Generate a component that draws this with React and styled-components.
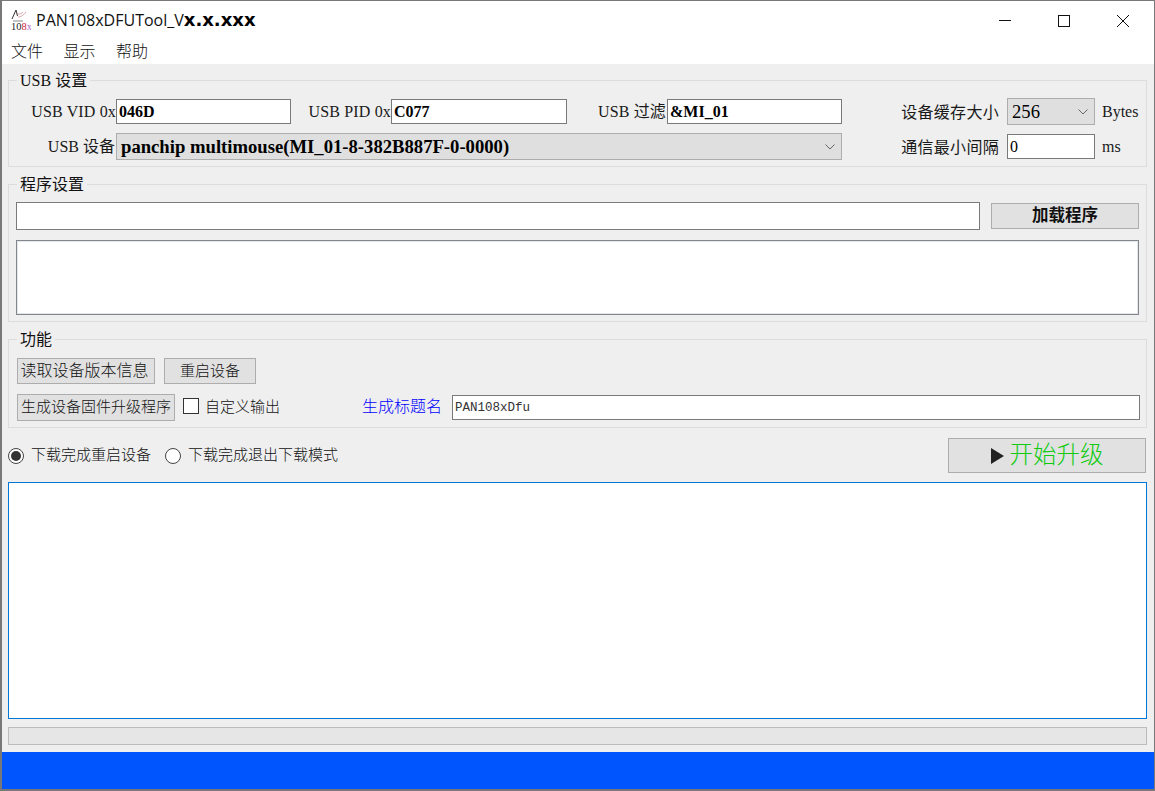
import React from "react";
import styled, { createGlobalStyle } from "styled-components";

const Global = createGlobalStyle`
  html, body { margin: 0; padding: 0; background: #fff; }
  * { box-sizing: border-box; }
`;
const SERIF = `"Liberation Serif", "Noto Sans CJK SC", serif`;
const CJK = `"Noto Sans CJK SC", "Liberation Serif", sans-serif`;

const Window = styled.div`
  width: 1155px; height: 791px; display: flex; flex-direction: column; overflow: hidden;
  border-style: solid; border-color: #787878; border-width: 1px 1px 2px 2px;
  background: #fff; font-family: ${SERIF}; font-size: 16px; color: #111;
`;
const TitleBar = styled.div`
  height: 38px; flex: none; display: flex; align-items: center; padding-left: 8px;
`;
const TitleText = styled.div`
  margin-left: 5px; font: 16px "Open Sans", sans-serif; color: #111; white-space: nowrap;
`;
const TitleVersion = styled.b`
  font: bold 18px "DejaVu Sans", sans-serif; color: #000;
`;
const WinButtons = styled.div`
  margin-left: auto; display: flex; height: 100%; padding-right: 2px;
`;
const WinButton = styled.div`
  width: 59px; display: flex; align-items: center; justify-content: center; padding-top: 2px;
`;
const Menu = styled.div`
  height: 25px; flex: none; display: flex; gap: 20.5px; padding: 0 0 4px 9px; align-items: center;
  font: 300 16px ${CJK}; color: #111;
`;
const Content = styled.div`
  flex: 1; background: #efefef; padding: 5px 7px 0 6px; display: flex; flex-direction: column; min-height: 0;
`;
const Group = styled.fieldset`
  margin: 0 0 ${p => p.$mb ?? 6}px; min-width: 0; border: 1px solid #dcdcdc; padding: ${p => p.$pad};
`;
const Legend = styled.legend`
  margin-left: ${p => p.$ml}px; padding: 0 3px; height: 22px; line-height: 24px; font-size: 16px; color: #111;
`;
const UsbGrid = styled.div`
  display: grid; grid-template-columns: 107px 175px 100px 176px 100px 175px 165px 88px 1fr;
  grid-auto-rows: 27px; row-gap: 8px; align-items: center; margin-top: 7px;
`;
const Label = styled.span`
  justify-self: ${p => p.$left ? "start" : "end"}; white-space: nowrap; color: #1a1a1a;
  padding: 0 ${p => p.$pr || 0}px ${p => p.$pb || 0}px ${p => p.$pl || 0}px;
  letter-spacing: ${p => p.$ls ?? 0.15}px; font-size: 16px;
`;
const Field = styled.input`
  height: 25px; width: 100%; border: 1px solid #7a7a7a; background: #fff; outline: none; padding: 0 2px;
  font: ${p => (p.$bold ? "bold" : "normal")} 16px ${SERIF}; color: #000; border-radius: 0;
`;
const SelectBox = styled.div`
  height: 27px; display: flex; align-items: center; justify-content: space-between;
  background: #dfdfdf; border: 1px solid #adadad; padding: 1px 6px 0 4px; color: #000;
  font-size: 18.67px; font-weight: ${p => p.$bold ? 700 : 400};
  grid-column: ${p => p.$span || "auto"}; white-space: nowrap;
`;
const Chevron = () => (
  <svg width="10" height="6" viewBox="0 0 10 6" fill="none"><path d="M.5.5 5 5 9.5.5" stroke="#666" strokeWidth="1" /></svg>
);
const PathRow = styled.div`
  display: grid; grid-template-columns: 1fr 148px; column-gap: 11px; align-items: center; height: 28px;
`;
const PathInput = styled(Field)`height: 28px;`;
const Button = styled.button`
  height: ${p => p.$h || 26}px; width: ${p => p.$w ? p.$w + "px" : "auto"}; flex: none;
  padding: 0 ${p => p.$pr || 0}px 4px 0;
  background: #e1e1e1; border: 1px solid #adadad; border-radius: 0; color: #111;
  font: ${p => p.$bold ? 700 : 300} ${p => p.$size || 15}px ${CJK};
  display: flex; align-items: center; justify-content: center; white-space: nowrap;
`;
const InfoBox = styled.div`
  height: 75px; margin-top: 10px; background: #fff; border: 1px solid #82868f;
  box-shadow: inset 1px 1px 0 #e6e6e6, inset -1px -1px 0 #e6e6e6;
`;
const FuncRow = styled.div`
  display: flex; align-items: center; gap: 9px; height: ${p => p.$h}px; margin-top: ${p => p.$mt || 0}px;
`;
const Check = styled.span`
  width: 16px; height: 16px; flex: none; background: #fff; border: 1px solid #333; margin: 0 -3px 3px -1px;
`;
const CjkText = styled.span`
  font: ${p => p.$weight || 300} ${p => p.$size || 15}px ${CJK}; color: ${p => p.$color || "#111"}; white-space: nowrap;
  margin: 0 ${p => p.$mr || 0}px 0 ${p => p.$ml || 0}px; padding-bottom: 5px;
`;
const TitleInput = styled.input`
  flex: 1; min-width: 0; height: 25px; border: 1px solid #7a7a7a; background: #fff; outline: none; padding: 0 2px;
  font: 12.5px "Liberation Mono", monospace; color: #333; border-radius: 0;
`;
const ActionRow = styled.div`
  height: 35px; margin-top: 10px; flex: none; display: flex; align-items: center;
`;
const Radio = styled.span`
  width: 16px; height: 16px; flex: none; border-radius: 50%; background: #fff; border: 1px solid #444;
  margin-left: ${p => p.$ml || 0}px; margin-right: 7px; display: flex; align-items: center; justify-content: center;
  &::after { content: ""; width: 10px; height: 10px; border-radius: 50%; background: ${p => p.$on ? "#333" : "transparent"}; }
`;
const StartButton = styled.button`
  margin: 0 1px 0 auto; width: 198px; height: 35px; padding: 0; background: #e1e1e1; border: 1px solid #adadad; border-radius: 0;
  display: flex; align-items: center; justify-content: center; gap: 6px;
`;
const StartLabel = styled.span`
  font: 300 23.5px ${CJK}; color: #0ecb0e; line-height: 1; padding-bottom: 4px;
`;
const LogBox = styled.div`
  height: 237px; margin-top: 9px; flex: none; background: #fff; border: 1px solid #0078d7;
`;
const Progress = styled.div`
  height: 18px; margin-top: 8px; flex: none; background: #e6e6e6; border: 1px solid #bcbcbc;
`;
const StatusBar = styled.div`
  height: 37px; flex: none; margin: 7px -7px 0 -6px; background: #0055ff;
`;

const Logo = () => (
  <svg width="21" height="24" viewBox="0 0 21 24">
    <path d="M2 11 6 2l1.5 6" fill="none" stroke="#333" strokeWidth="1" />
    <path d="M7 5c2 2 4 1 6-1m-5 5c2 0 5-1 8-5" fill="none" stroke="#c98a92" strokeWidth=".8" />
    <rect x="3" y="12.5" width="10" height="1" fill="#888" />
    <text x="1" y="22" fontFamily="Liberation Serif" fontSize="10.5" fill="#222">10<tspan fill="#c23">8</tspan><tspan fill="#a6c">x</tspan></text>
  </svg>
);

export default function App() {
  return (
    <Window>
      <Global />
      <TitleBar>
        <Logo />
        <TitleText>PAN108xDFUTool_V<TitleVersion>x.x.xxx</TitleVersion></TitleText>
        <WinButtons>
          <WinButton><svg width="12" height="12" viewBox="0 0 12 12"><path d="M0 5.5h12" stroke="#111" /></svg></WinButton>
          <WinButton><svg width="12" height="12" viewBox="0 0 12 12"><rect x=".5" y=".5" width="11" height="11" fill="none" stroke="#111" /></svg></WinButton>
          <WinButton><svg width="12" height="12" viewBox="0 0 12 12"><path d="M0 0l12 12M12 0 0 12" stroke="#111" /></svg></WinButton>
        </WinButtons>
      </TitleBar>
      <Menu><span>文件</span><span>显示</span><span>帮助</span></Menu>
      <Content>
        <Group $pad="0 0 6px 0">
          <Legend $ml={8}>USB 设置</Legend>
          <UsbGrid>
            <Label>USB VID 0x</Label>
            <Field $bold readOnly value="046D" />
            <Label>USB PID 0x</Label>
            <Field $bold readOnly value="C077" />
            <Label $pb={4} $pr={1}>USB 过滤</Label>
            <Field $bold readOnly value="&MI_01" />
            <Label $pb={2} $pr={8} $ls={0.3}>设备缓存大小</Label>
            <SelectBox>256<Chevron /></SelectBox>
            <Label $left $pl={7} $ls={0}>Bytes</Label>
            <Label $pb={4} $pr={1} $ls={0}>USB 设备</Label>
            <SelectBox $bold $span="2 / span 5">panchip multimouse(MI_01-8-382B887F-0-0000)<Chevron /></SelectBox>
            <Label $pb={2} $pr={8} $ls={0.3}>通信最小间隔</Label>
            <Field readOnly value="0" />
            <Label $left $pl={7} $ls={0}>ms</Label>
          </UsbGrid>
        </Group>
        <Group $pad="7px 7px 6px">
          <Legend $ml={1}>程序设置</Legend>
          <PathRow>
            <PathInput readOnly value="" />
            <Button $bold $size={16.5}>加载程序</Button>
          </PathRow>
          <InfoBox />
        </Group>
        <Group $pad="8px 6px 6px 8px" $mb={0}>
          <Legend $ml={0}>功能</Legend>
          <FuncRow $h={26}>
            <Button $w={138} $size={16} $pr={3}>读取设备版本信息</Button>
            <Button $w={92}>重启设备</Button>
          </FuncRow>
          <FuncRow $h={27} $mt={10}>
            <Button $w={158} $h={27}>生成设备固件升级程序</Button>
            <Check />
            <CjkText>自定义输出</CjkText>
            <CjkText $color="#0000ff" $ml={73} $mr={1} $size={16} $weight={300}>生成标题名</CjkText>
            <TitleInput readOnly value="PAN108xDfu" />
          </FuncRow>
        </Group>
        <ActionRow>
          <Radio $on />
          <CjkText>下载完成重启设备</CjkText>
          <Radio $ml={14} />
          <CjkText>下载完成退出下载模式</CjkText>
          <StartButton>
            <svg width="13" height="16" viewBox="0 0 13 16"><path d="M0 0l13 8-13 8z" fill="#222" /></svg>
            <StartLabel>开始升级</StartLabel>
          </StartButton>
        </ActionRow>
        <LogBox />
        <Progress />
        <StatusBar />
      </Content>
    </Window>
  );
}
